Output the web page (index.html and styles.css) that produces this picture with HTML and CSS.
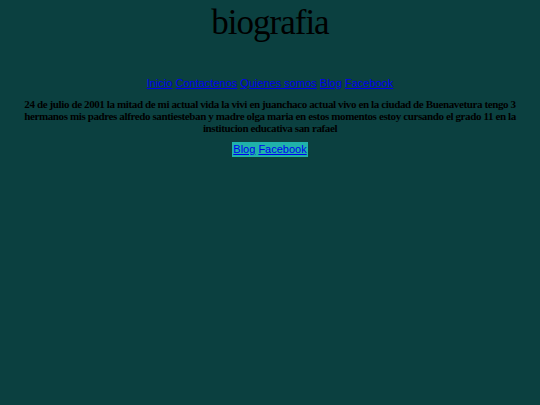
FILE: index.html
```html
<!DOCTYPE html>
<html>
<head>
<meta charset="utf-8">
<link rel="stylesheet" href="styles.css">
</head>
<body>
<h1 class="title">biografia</h1>
<nav class="menu">
<a href="#">Inicio</a> <a href="#">Contactenos</a> <a href="#">Quienes somos</a> <a href="#">Blog</a> <a href="#">Facebook</a>
</nav>
<p class="bio">24 de julio de 2001 la mitad de mi actual vida la vivi en juanchaco actual vivo en la ciudad de Buenavetura tengo 3 hermanos mis padres alfredo santiesteban y madre olga maria en estos momentos estoy cursando el grado 11 en la institucion educativa san rafael</p>
<div class="foot"><span class="box"><a href="#">Blog</a> <a href="#">Facebook</a></span></div>
</body>
</html>
```
FILE: styles.css
```css
html, body { margin: 0; padding: 0; }
body {
  background: #0b4040;
  color: #000;
  font-family: "Liberation Serif", serif;
  padding: 0 22px;
}
.title {
  margin: 0;
  padding-top: 2px;
  text-align: center;
  font-weight: normal;
  font-size: 35px;
  line-height: 41px;
  letter-spacing: -1px;
}
.menu {
  margin-top: 34px;
  text-align: center;
  font-family: "Liberation Sans", sans-serif;
  font-size: 11px;
  line-height: 13px;
}
a { color: #0000ee; }
.bio {
  margin: 8px 0 0;
  text-align: center;
  font-weight: bold;
  font-size: 11px;
  line-height: 12px;
  letter-spacing: -0.38px;
}
.foot {
  margin-top: 8px;
  text-align: center;
  font-family: "Liberation Sans", sans-serif;
  font-size: 11px;
  line-height: 13px;
}
.box {
  display: inline-block;
  vertical-align: top;
  background: #20b2aa;
  padding: 1px 1px;
}
```
